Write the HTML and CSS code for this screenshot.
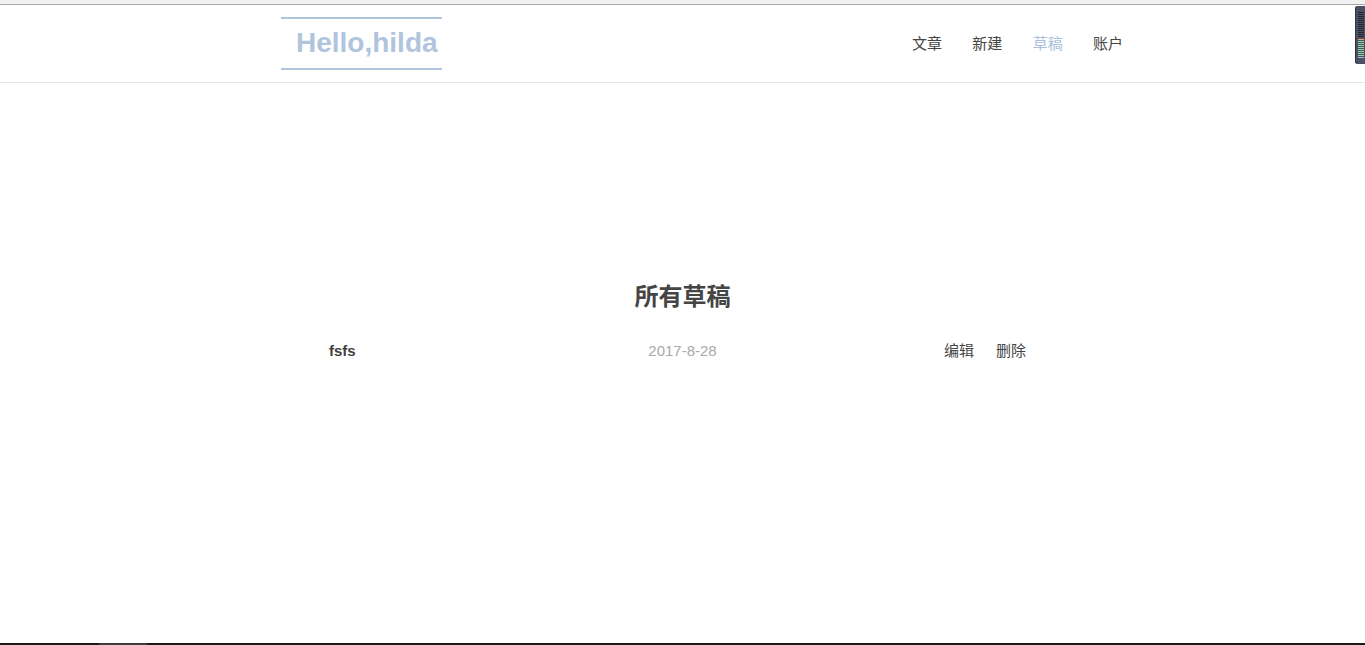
FILE: index.html
```html
<!DOCTYPE html>
<html lang="zh-CN">
<head>
<meta charset="utf-8">
<title>所有草稿</title>
<link rel="stylesheet" href="styles.css">
</head>
<body>
<div class="topstrip"></div>
<header class="header">
  <div class="header-inner">
    <a class="logo" href="#">Hello,hilda</a>
    <nav class="nav">
      <a href="#">文章</a>
      <a href="#">新建</a>
      <a href="#" class="active">草稿</a>
      <a href="#">账户</a>
    </nav>
  </div>
</header>
<main class="main">
  <h1 class="title">所有草稿</h1>
  <div class="row">
    <span class="name">fsfs</span>
    <span class="date">2017-8-28</span>
    <span class="actions"><a href="#">编辑</a><a href="#">删除</a></span>
  </div>
</main>
<div class="meter"><div class="meter-bars"></div></div>
<div class="taskbar"><span class="taskbar-item"></span></div>
</body>
</html>
```
FILE: styles.css
```css
html, body {
  margin: 0;
  padding: 0;
  background: #fff;
  font-family: "Liberation Sans", "Noto Sans CJK SC", sans-serif;
  color: #444;
}
a { text-decoration: none; }

.topstrip {
  height: 4px;
  background: #f1f1f1;
  border-bottom: 1px solid #a8a8a8;
}

.header {
  height: 77px;
  border-bottom: 1px solid #e6e6e6;
}
.header-inner {
  width: 842px;
  margin-left: calc(50% - 401.5px);
  height: 100%;
  display: flex;
  align-items: center;
  justify-content: space-between;
}
.logo {
  display: block;
  box-sizing: border-box;
  width: 161px;
  height: 53px;
  border-top: 2px solid #b0c4de;
  border-bottom: 2px solid #b0c4de;
  padding-left: 15px;
  font-size: 28px;
  font-weight: bold;
  line-height: 48px;
  color: #b0c4de;
}
.nav {
  display: flex;
  gap: 30.3px;
  font-size: 15px;
  line-height: 20px;
}
.nav a { color: #444; }
.nav a.active { color: #a9bfdb; }

.main {
  padding-top: 197px;
}
.title {
  margin: 0;
  text-align: center;
  font-size: 24px;
  font-weight: bold;
  line-height: 34px;
  color: #454545;
}
.row {
  width: 707px;
  margin-left: calc(50% - 353.5px);
  margin-top: 27px;
  display: grid;
  grid-template-columns: 1fr auto 1fr;
  font-size: 15px;
  line-height: 20px;
}
.name { font-weight: bold; color: #3f3f3f; }
.date { color: #a9a9a9; }
.actions {
  justify-self: end;
  margin-right: 10px;
  display: flex;
  gap: 22px;
}
.actions a { color: #444; }

.meter {
  position: absolute;
  top: 6px;
  right: 0;
  width: 10px;
  height: 58px;
  background: #4b5162;
  border-radius: 3px 0 0 3px;
  box-shadow: inset 1px 0 0 #2f3440;
}
.meter-bars {
  position: absolute;
  left: 3px;
  top: 6px;
  width: 6px;
  height: 46px;
  background:
    repeating-linear-gradient(to bottom, #23262e 0 1px, transparent 1px 2px) 0 0 / 6px 26px no-repeat,
    linear-gradient(#e9a272, #e9a272) 0 27px / 6px 1px no-repeat,
    repeating-linear-gradient(to bottom, #8fd9a0 0 1px, transparent 1px 2px) 0 29px / 6px 15px no-repeat,
    linear-gradient(#8fbfe8, #8fbfe8) 0 45px / 6px 1px no-repeat;
}

.taskbar {
  position: fixed;
  left: 0;
  right: 0;
  bottom: 0;
  height: 2px;
  background: #1b1b1b;
}
.taskbar-item {
  position: absolute;
  left: 99px;
  width: 48px;
  height: 2px;
  background: #3d3d3d;
}
```
